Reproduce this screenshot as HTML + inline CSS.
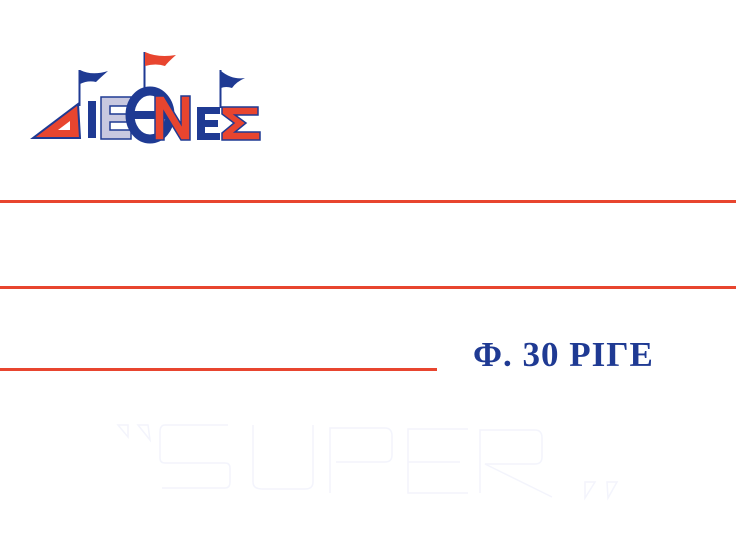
<!DOCTYPE html>
<html><head><meta charset="utf-8"><style>
html,body{margin:0;padding:0;background:#fff;}
body{width:736px;height:533px;position:relative;overflow:hidden;font-family:"Liberation Serif",serif;}
.l{position:absolute;left:0;height:3px;background:#e8452f;}
.t{position:absolute;left:473px;top:335px;font-size:35px;font-weight:bold;color:#1f3a93;white-space:nowrap;letter-spacing:1px;}
</style></head><body>
<svg width="736" height="533" style="position:absolute;left:0;top:0">
 <line x1="79.5" y1="70" x2="79.5" y2="106" stroke="#1f3a93" stroke-width="2"/>
 <path d="M80 70 Q92 76 108 71 Q100 78 96 82 Q88 80 80 84Z" fill="#1f3a93"/>
 <line x1="144.5" y1="52" x2="144.5" y2="92" stroke="#1f3a93" stroke-width="2"/>
 <path d="M145 52 Q158 58 176 55 Q168 62 165 66 Q156 63 145 66Z" fill="#e8452f"/>
 <line x1="220.5" y1="70" x2="220.5" y2="108" stroke="#1f3a93" stroke-width="2"/>
 <path d="M221 71 Q232 80 245 78 Q236 82 232 88 Q226 86 221 88Z" fill="#1f3a93"/>
 <path d="M33 138 L78 104 L80 138Z" fill="#e8452f" stroke="#1f3a93" stroke-width="2"/>
 <path d="M58 130 L70 121 L70 130Z" fill="#fff"/>
 <rect x="88" y="101" width="8" height="37" fill="#1f3a93"/>
 <path d="M101 97 H131 V106 H110 V114 H128 V122 H110 V130 H131 V139 H101Z" fill="#c8c8e0" stroke="#1f3a93" stroke-width="1.5"/>
 <ellipse cx="150" cy="115" rx="20" ry="24" fill="none" stroke="#1f3a93" stroke-width="9"/>
 <rect x="132" y="111" width="36" height="8" fill="#1f3a93"/>
 <path d="M155 96 H164 L181 124 V96 H190 V140 H181 L164 112 V140 H155Z" fill="#e8452f" stroke="#1f3a93" stroke-width="1.5"/>
 <path d="M197 107 H220 V114 H205 V120 H218 V127 H205 V133 H220 V140 H197Z" fill="#1f3a93"/>
 <path d="M222 107 H258 V115 H235 L246 123 L235 132 H260 V140 H222 V133 L234 123 L222 114Z" fill="#e8452f" stroke="#1f3a93" stroke-width="1.5"/>
 <g fill="none" stroke="#f3f4fc" stroke-width="1.5">
  <path d="M228 425 H165 Q160 425 160 432 V458 Q160 463 165 463 H225 Q230 463 230 468 V482 Q230 488 225 488 H162"/>
  <path d="M253 425 V482 Q253 489 262 489 H305 Q313 489 313 482 V425"/>
  <path d="M330 493 V428 H385 Q392 428 392 436 V455 Q392 462 385 462 H336"/>
  <path d="M468 429 H408 V493 H468 M408 462 H460"/>
  <path d="M480 493 V430 H535 Q542 430 542 438 V457 Q542 464 535 464 H485 L552 497"/>
  <path d="M118 425 H128 L128 437Z M138 425 H148 L150 440Z M585 482 H595 L585 498Z M607 482 H617 L608 498Z"/>
 </g>
</svg>
<div class="l" style="top:200px;width:736px"></div>
<div class="l" style="top:286px;width:736px"></div>
<div class="l" style="top:368px;width:437px"></div>
<div class="t">Φ. 30 ΡΙΓΕ</div>
</body></html>
